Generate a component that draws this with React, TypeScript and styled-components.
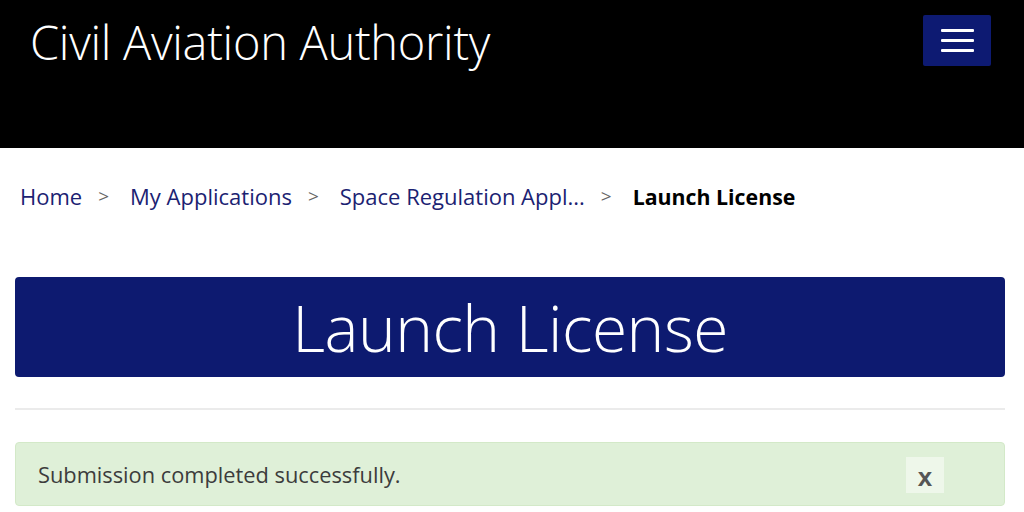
import React from 'react';
import styled, { createGlobalStyle } from 'styled-components';

const GlobalStyle = createGlobalStyle`
  html, body {
    margin: 0;
    padding: 0;
    background: #fff;
    font-family: "Open Sans", "Noto Sans", sans-serif;
  }
`;

const Header = styled.header`
  height: 148px;
  background: #000;
  display: flex;
  align-items: flex-start;
  justify-content: space-between;
  padding: 0 33px 0 30px;
  box-sizing: border-box;
`;

const Brand = styled.div`
  color: #fff;
  font-size: 47px;
  font-weight: 300;
  line-height: 1;
  margin-top: 19px;
  letter-spacing: -0.3px;
`;

const MenuButton = styled.button`
  margin-top: 15px;
  width: 68px;
  height: 51px;
  background: #0d1a72;
  border: none;
  border-radius: 2px;
  display: flex;
  flex-direction: column;
  justify-content: center;
  align-items: center;
  gap: 7px;
  padding: 0;
`;

const MenuBar = styled.span`
  display: block;
  width: 33px;
  height: 3px;
  background: #fff;
  border-radius: 1px;
`;

const Main = styled.main`
  padding: 0 19px 0 15px;
`;

const Crumbs = styled.nav`
  display: flex;
  align-items: center;
  padding: 0 0 0 5px;
  height: 96px;
  box-sizing: border-box;
  font-size: 22px;
`;

const Crumb = styled.a<{ $current?: boolean }>`
  color: ${(p) => (p.$current ? '#000' : '#1b2272')};
  font-weight: ${(p) => (p.$current ? 700 : 400)};
  font-size: ${(p) => (p.$current ? '21.3px' : '22px')};
  text-decoration: none;
`;

const Sep = styled.span`
  color: #666;
  margin: 0 21px 0 16px;
  font-size: 19px;
`;

const Banner = styled.h1`
  margin: 33px 0 0;
  height: 100px;
  background: #0d1a70;
  border-radius: 4px;
  color: #fff;
  font-size: 64px;
  font-weight: 300;
  display: flex;
  align-items: center;
  justify-content: center;
  letter-spacing: -0.5px;
`;

const Rule = styled.hr`
  margin: 31px 0 32px;
  border: none;
  border-top: 2px solid #ebebeb;
`;

const Alert = styled.div`
  height: 64px;
  box-sizing: border-box;
  background: #dff0d8;
  border: 1px solid #d3e9c8;
  border-radius: 4px;
  display: flex;
  align-items: center;
  justify-content: space-between;
  padding: 0 60px 0 22px;
  color: #3c3c3c;
  font-size: 21.8px;
`;

const CloseButton = styled.button`
  width: 38px;
  height: 36px;
  margin-top: 2px;
  background: #eef7ea;
  border: none;
  color: #555;
  font-family: "Liberation Sans", Arial, sans-serif;
  font-weight: 700;
  font-size: 26px;
  line-height: 1;
  padding: 4px 0 0;
`;

export default function App() {
  return (
    <>
      <GlobalStyle />
      <Header>
        <Brand>Civil Aviation Authority</Brand>
        <MenuButton aria-label="Menu">
          <MenuBar />
          <MenuBar />
          <MenuBar />
        </MenuButton>
      </Header>
      <Main>
        <Crumbs>
          <Crumb href="#">Home</Crumb>
          <Sep>&gt;</Sep>
          <Crumb href="#">My Applications</Crumb>
          <Sep>&gt;</Sep>
          <Crumb href="#">Space Regulation Appl...</Crumb>
          <Sep>&gt;</Sep>
          <Crumb $current>Launch License</Crumb>
        </Crumbs>
        <Banner>Launch License</Banner>
        <Rule />
        <Alert>
          <span>Submission completed successfully.</span>
          <CloseButton>x</CloseButton>
        </Alert>
      </Main>
    </>
  );
}
